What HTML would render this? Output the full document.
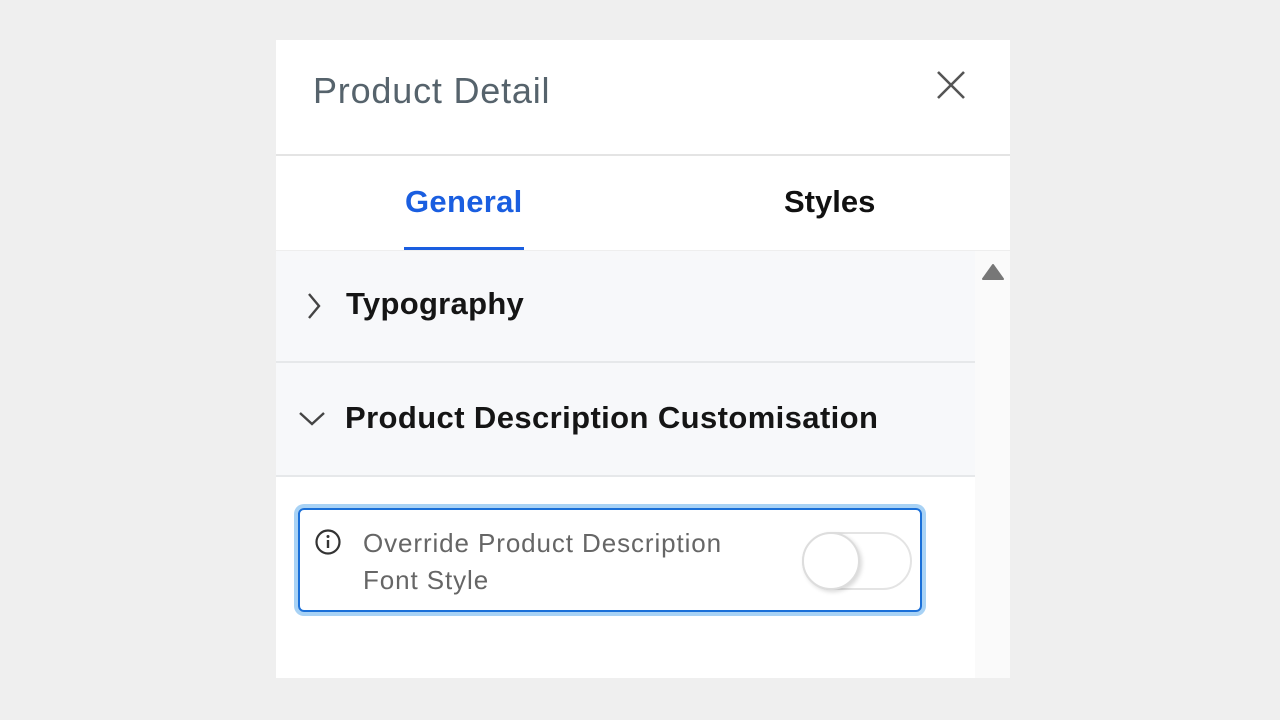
<!DOCTYPE html>
<html><head><style>
body{margin:0;width:1280px;height:720px;background:#efefef;font-family:"Liberation Sans",sans-serif;position:relative;overflow:hidden}
.p{position:absolute;left:276px;top:40px;width:734px;height:638px;background:#fff}
.a{position:absolute;white-space:nowrap}
</style></head><body>
<div class="p">
 <div class="a" style="left:37px;top:30px;font-size:36px;letter-spacing:0.8px;color:#56636c">Product Detail</div>
 <svg class="a" style="left:660px;top:30px" width="30" height="30"><path d="M2 2L28 28M28 2L2 28" stroke="#555" stroke-width="2.6"/></svg>
 <div class="a" style="left:0;top:114px;width:734px;height:2px;background:#e4e4e4"></div>
 <div class="a" style="left:129px;top:144px;font-size:31px;font-weight:bold;letter-spacing:0.3px;color:#1a5ee0">General</div>
 <div class="a" style="left:508px;top:144px;font-size:31px;font-weight:bold;color:#111">Styles</div>
 <div class="a" style="left:128px;top:207px;width:120px;height:3px;background:#1a5ee0"></div>
 <div class="a" style="left:0;top:210px;width:734px;height:1px;background:#eee"></div>
 <div class="a" style="left:0;top:211px;width:699px;height:110px;background:#f7f8fa"></div>
 <div class="a" style="left:0;top:321px;width:699px;height:2px;background:#e6e8ea"></div>
 <div class="a" style="left:0;top:323px;width:699px;height:112px;background:#f7f8fa"></div>
 <div class="a" style="left:0;top:435px;width:699px;height:2px;background:#e6e8ea"></div>
 <div class="a" style="left:699px;top:211px;width:35px;height:427px;background:#fafafa"></div>
 <svg class="a" style="left:705px;top:223px" width="24" height="18"><path d="M12 2L22 16H2Z" fill="#777" stroke="#777" stroke-linejoin="round" stroke-width="2"/></svg>
 <svg class="a" style="left:30px;top:252px" width="16" height="28"><path d="M3 2L13 14L3 26" fill="none" stroke="#444" stroke-width="2.4"/></svg>
 <div class="a" style="left:70px;top:246px;font-size:31px;font-weight:bold;letter-spacing:0.3px;color:#151515">Typography</div>
 <svg class="a" style="left:22px;top:370px" width="28" height="16"><path d="M2 3L14 14L26 3" fill="none" stroke="#444" stroke-width="2.4"/></svg>
 <div class="a" style="left:69px;top:360px;font-size:31px;font-weight:bold;letter-spacing:0.4px;color:#151515">Product Description Customisation</div>
 <div class="a" style="left:22px;top:468px;width:620px;height:100px;border:2px solid #1a6fd8;border-radius:6px;box-shadow:0 0 0 4px #a8d2f5"></div>
 <svg class="a" style="left:38px;top:488px" width="28" height="28"><circle cx="14" cy="14" r="11.5" fill="none" stroke="#333" stroke-width="2.2"/><path d="M14 12V20" stroke="#333" stroke-width="2.4"/><circle cx="14" cy="8.5" r="1.5" fill="#333"/></svg>
 <div class="a" style="left:87px;top:485px;font-size:26px;letter-spacing:0.9px;line-height:37px;color:#666">Override Product Description<br>Font Style</div>
 <div class="a" style="left:526px;top:492px;width:106px;height:54px;border:2px solid #e4e4e4;border-radius:30px;background:#fff"></div>
 <div class="a" style="left:526px;top:492px;width:54px;height:54px;border:2px solid #ddd;border-radius:50%;background:#fff;box-shadow:2px 2px 4px rgba(0,0,0,.15)"></div>
</div>
</body></html>
